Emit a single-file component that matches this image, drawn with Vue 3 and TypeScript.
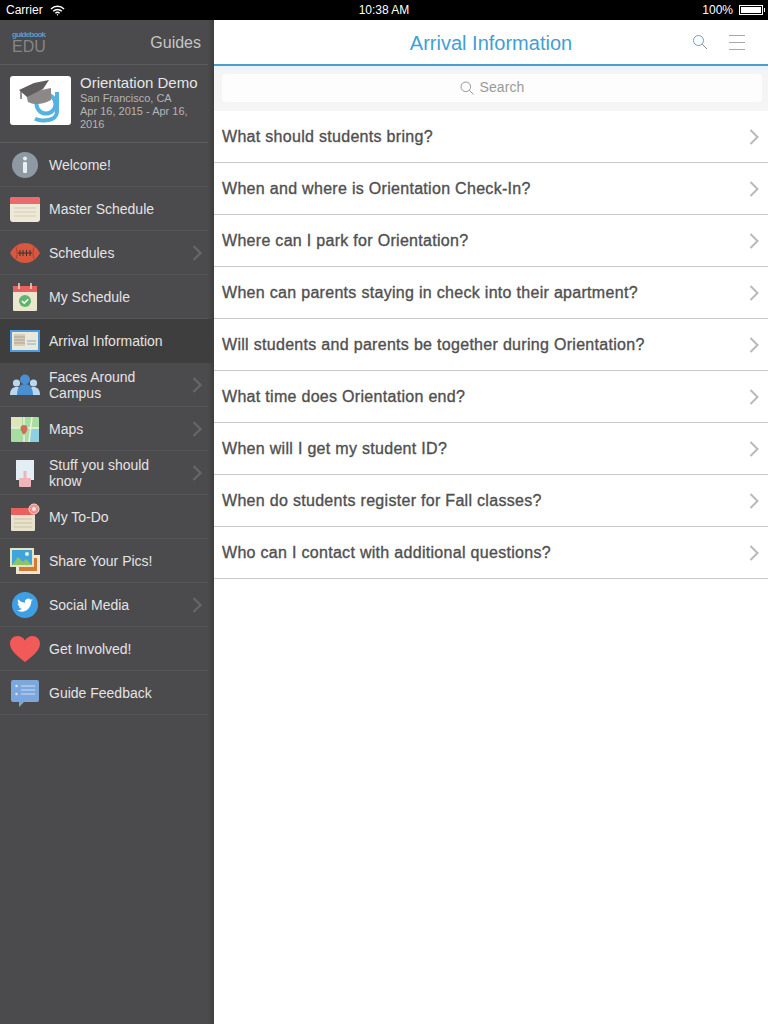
<script setup lang="ts">
const menu = [
  { label: "Welcome!", icon: "info" },
  { label: "Master Schedule", icon: "calendar" },
  { label: "Schedules", icon: "football", more: true },
  { label: "My Schedule", icon: "check" },
  { label: "Arrival Information", icon: "arrival", active: true },
  { label: "Faces Around Campus", icon: "faces", more: true },
  { label: "Maps", icon: "map", more: true },
  { label: "Stuff you should know", icon: "stuff", more: true },
  { label: "My To-Do", icon: "todo" },
  { label: "Share Your Pics!", icon: "pics" },
  { label: "Social Media", icon: "twitter", more: true },
  { label: "Get Involved!", icon: "heart" },
  { label: "Guide Feedback", icon: "feedback" },
];

const questions = [
  "What should students bring?",
  "When and where is Orientation Check-In?",
  "Where can I park for Orientation?",
  "When can parents staying in check into their apartment?",
  "Will students and parents be together during Orientation?",
  "What time does Orientation end?",
  "When will I get my student ID?",
  "When do students register for Fall classes?",
  "Who can I contact with additional questions?",
];
</script>

<template>
  <div class="screen">
    <header class="status">
      <div class="status-left">
        <span>Carrier</span>
        <svg width="15" height="11" viewBox="0 0 15 11" fill="none" stroke="#fff" stroke-width="1.5">
          <path d="M1 4a9.2 9.2 0 0 1 13 0" />
          <path d="M3.2 6.2a6.1 6.1 0 0 1 8.6 0" />
          <path d="M5.4 8.3a3 3 0 0 1 4.2 0" />
          <circle cx="7.5" cy="9.7" r=".7" fill="#fff" stroke="none" />
        </svg>
      </div>
      <div class="status-time">10:38 AM</div>
      <div class="status-right">
        <span>100%</span>
        <span class="battery"><span class="battery-fill"></span></span>
      </div>
    </header>

    <div class="body">
      <aside class="sidebar">
        <div class="side-head">
          <div class="brand">
            <span class="brand-top">guidebook</span>
            <span class="brand-edu">EDU</span>
          </div>
          <span class="guides">Guides</span>
        </div>

        <div class="guide-card">
          <div class="guide-logo">
            <svg width="61" height="49" viewBox="0 0 61 49">
              <path d="M47 16v19c0 7-6 10-15 9.500-3-.2-5-.8-7-1.800" fill="none" stroke="#55b1e0" stroke-width="4" />
              <circle cx="36" cy="28" r="9.500" fill="none" stroke="#55b1e0" stroke-width="4" />
              <path d="M17 17c0 4 0 7 1 9 5 3 15 3 23-2V12z" fill="#8c8887" />
              <path d="M9 14 24 7 39 4 33 13 17 21z" fill="#5f5d5e" />
              <path d="M11 15v8" stroke="#6f6c6c" stroke-width="1.500" />
            </svg>
          </div>
          <div class="guide-text">
            <div class="guide-name">Orientation Demo</div>
            <div class="guide-meta">San Francisco, CA</div>
            <div class="guide-meta">Apr 16, 2015 - Apr 16, 2016</div>
          </div>
        </div>

        <nav class="menu">
          <div v-for="item in menu" :key="item.label" class="menu-row" :class="{ active: item.active }">
            <svg class="menu-icon" width="32" height="32" viewBox="0 0 32 32">
              <template v-if="item.icon === 'info'">
                <circle cx="16" cy="16" r="13" fill="#8d9aa3" />
                <circle cx="16" cy="9.500" r="2" fill="#e8eef2" />
                <rect x="14" y="13" width="4" height="11" rx="1" fill="#e8eef2" />
              </template>
              <template v-else-if="item.icon === 'calendar'">
                <rect x="1" y="4" width="30" height="25" rx="3" fill="#eee8d6" />
                <path d="M1 7a3 3 0 0 1 3-3h24a3 3 0 0 1 3 3v4H1z" fill="#ed6a6a" />
                <path d="M5 15h22M5 19h22M5 23h22" stroke="#d3ccb6" stroke-width="1" />
              </template>
              <template v-else-if="item.icon === 'football'">
                <path d="M1 16C5 9 10 6 16 6s11 3 15 10c-4 7-9 10-15 10S5 23 1 16z" fill="#d9573f" />
                <path d="M9 16h14M11 13v6M14 13v6M17.500 13v6M21 13v6" stroke="#3f2f2b" stroke-width="1" />
                <path d="M7 10c1.500 4 1.500 8 0 12M25 10c-1.500 4-1.500 8 0 12" fill="none" stroke="#a8412f" stroke-width="1" />
              </template>
              <template v-else-if="item.icon === 'check'">
                <rect x="4" y="5" width="24" height="25" rx="1" fill="#ece6cf" />
                <path d="M4 6a1 1 0 0 1 1-1h22a1 1 0 0 1 1 1v5H4z" fill="#e9605e" />
                <path d="M10 2v6M22 2v6" stroke="#e9dfc8" stroke-width="1.500" />
                <circle cx="16" cy="20" r="6" fill="#5fb56d" />
                <path d="M13 20l2.200 2.200 4-4" fill="none" stroke="#fff" stroke-width="1.500" />
              </template>
              <template v-else-if="item.icon === 'arrival'">
                <rect x="1" y="5" width="30" height="22" fill="#4d9ce0" />
                <rect x="3" y="7" width="26" height="18" fill="#ece8d8" />
                <rect x="5" y="9" width="11" height="12" fill="#d8ccb8" />
                <path d="M5 12h11M5 15h11M5 18h11" stroke="#a9a594" stroke-width="1" />
                <path d="M18 16h9M18 19h9" stroke="#7aaed0" stroke-width="1.200" />
              </template>
              <template v-else-if="item.icon === 'faces'">
                <circle cx="7.500" cy="14" r="3.600" fill="#b9d8ef" />
                <path d="M1 26c0-6 3-8 6.500-8s7 2 7 8z" fill="#b9d8ef" />
                <circle cx="24.500" cy="14" r="3.600" fill="#b9d8ef" />
                <path d="M17.500 26c0-6 3.500-8 7-8s6.500 2 6.500 8z" fill="#b9d8ef" />
                <circle cx="16" cy="10.500" r="5" fill="#4a8fd0" />
                <path d="M8 26c0-8 4-11 8-11s8 3 8 11z" fill="#4a8fd0" />
              </template>
              <template v-else-if="item.icon === 'map'">
                <rect x="2" y="4" width="28" height="25" rx="1" fill="#a9dca0" />
                <path d="M2 4h11v11H2z" fill="#dfe5b8" />
                <path d="M20 16h10v13H20z" fill="#8fcfe6" />
                <path d="M15 4v25M2 15h28M23 4l-3 25" stroke="#e8eee0" stroke-width="1.600" fill="none" />
                <path d="M15 12a3.500 3.500 0 0 1 3.500 3.500c0 2.500-3.500 6.500-3.500 6.500s-3.500-4-3.500-6.500A3.500 3.500 0 0 1 15 12z" fill="#c9705c" />
              </template>
              <template v-else-if="item.icon === 'stuff'">
                <rect x="7" y="3" width="18" height="20" fill="#e3edf4" />
                <rect x="10" y="21" width="12" height="9" rx="1" fill="#efb4b8" />
                <path d="M16 14v10" stroke="#efb4b8" stroke-width="3" />
              </template>
              <template v-else-if="item.icon === 'todo'">
                <rect x="2" y="7" width="24" height="23" rx="1" fill="#e9e2cb" />
                <path d="M2 8a1 1 0 0 1 1-1h22a1 1 0 0 1 1 1v6H2z" fill="#e9605e" />
                <path d="M5 18h18M5 22h18M5 26h18" stroke="#c9c2aa" stroke-width="1.200" />
                <circle cx="25" cy="8" r="5" fill="#f08a88" stroke="#e9e2cb" stroke-width="1" />
                <path d="M25 5.500v5M22.800 6.700l4.400 2.600M27.200 6.700l-4.400 2.600" stroke="#fff" stroke-width="1" />
              </template>
              <template v-else-if="item.icon === 'pics'">
                <rect x="7" y="10" width="24" height="19" fill="#efe6cf" />
                <rect x="10" y="13" width="18" height="13" fill="#d57a34" />
                <rect x="1" y="3" width="24" height="19" fill="#e6e2c5" />
                <rect x="3" y="5" width="20" height="15" fill="#3fa3dc" />
                <path d="M3 20l6-8 5 5 3-3 6 6z" fill="#8dc36b" />
                <circle cx="18" cy="9" r="2" fill="#eef2d0" />
              </template>
              <template v-else-if="item.icon === 'twitter'">
                <circle cx="16" cy="16" r="13" fill="#3f9fe6" />
                <path d="M24 11.200c-.6.300-1.200.400-1.900.500.700-.400 1.200-1 1.400-1.800-.6.400-1.300.600-2 .800a3.300 3.300 0 0 0-5.600 3c-2.700-.1-5.100-1.400-6.700-3.400-.9 1.500-.4 3.400 1 4.400-.5 0-1-.2-1.500-.4 0 1.600 1.100 3 2.600 3.300-.5.100-1 .100-1.500 0 .4 1.300 1.600 2.200 3.100 2.300-1.400 1.100-3.200 1.600-4.900 1.400 4.800 3.100 13.900 1.200 14.400-9.200.7-.4 1.200-1 1.600-1.700z" fill="#fff" />
              </template>
              <template v-else-if="item.icon === 'heart'">
                <path d="M16 29C8 23 1 17 1 10.500 1 6 4.500 3 8.500 3c3 0 6 1.600 7.500 4.500C17.500 4.600 20.500 3 23.500 3 27.500 3 31 6 31 10.500 31 17 24 23 16 29z" fill="#f25a5a" />
              </template>
              <template v-else-if="item.icon === 'feedback'">
                <path d="M4 3h24a2 2 0 0 1 2 2v18a2 2 0 0 1-2 2H15l-5 5v-5H4a2 2 0 0 1-2-2V5a2 2 0 0 1 2-2z" fill="#7ba7dc" />
                <path d="M12 9h14M12 13h14M12 17h14" stroke="#cfe0f4" stroke-width="1.200" />
                <circle cx="7.500" cy="9" r="1.200" fill="#dce9f7" />
                <circle cx="7.500" cy="17" r="1.200" fill="#dce9f7" />
              </template>
            </svg>
            <span class="menu-label">{{ item.label }}</span>
            <svg v-if="item.more" class="menu-more" width="10" height="16" viewBox="0 0 10 16" fill="none" stroke="#666566" stroke-width="2.400">
              <path d="M1.500 1l7 7-7 7" />
            </svg>
          </div>
        </nav>
      </aside>

      <main class="content">
        <div class="topbar">
          <h1 class="title">Arrival Information</h1>
          <svg class="top-search" width="16" height="16" viewBox="0 0 16 16" fill="none" stroke="#5ba6cf" stroke-width="1">
            <circle cx="6.500" cy="6.500" r="5" />
            <path d="M10.200 10.200l4.800 4.800" stroke="#8a8a8a" />
          </svg>
          <div class="burger"><i></i><i></i><i></i></div>
        </div>
        <div class="search-wrap">
          <div class="search-box">
            <svg width="14" height="14" viewBox="0 0 14 14" fill="none" stroke="#9a9a9a" stroke-width="1">
              <circle cx="5.800" cy="5.800" r="4.800" />
              <path d="M9.300 9.300l4.200 4.200" />
            </svg>
            <span>Search</span>
          </div>
        </div>
        <ul class="list">
          <li v-for="q in questions" :key="q" class="list-row">
            <span>{{ q }}</span>
            <svg width="10" height="16" viewBox="0 0 10 16" fill="none" stroke="#b9b9b9" stroke-width="2">
              <path d="M1.500 1l7 7-7 7" />
            </svg>
          </li>
        </ul>
      </main>
    </div>
  </div>
</template>

<style scoped>
.screen {
  width: 768px;
  height: 1024px;
  display: flex;
  flex-direction: column;
  overflow: hidden;
  font-family: "Liberation Sans", Arial, sans-serif;
  background: #fff;
}

.status {
  height: 20px;
  flex: none;
  background: #000;
  color: #fff;
  font-size: 12px;
  display: grid;
  grid-template-columns: 1fr auto 1fr;
  align-items: center;
  padding: 0 6px;
}
.status-left {
  display: flex;
  align-items: center;
  gap: 7px;
}
.status-right {
  display: flex;
  justify-content: flex-end;
  align-items: center;
  gap: 6px;
}
.battery {
  width: 24px;
  height: 10px;
  margin-right: -1px;
  border: 1px solid #fff;
  box-sizing: border-box;
  padding: 1px;
  display: block;
  position: relative;
}
.battery::after {
  content: "";
  position: absolute;
  right: -3px;
  top: 2px;
  width: 1px;
  height: 4px;
  background: #fff;
}
.battery-fill {
  display: block;
  height: 100%;
  background: #fff;
}

.body {
  flex: 1;
  display: flex;
  min-height: 0;
}

.sidebar {
  width: 214px;
  flex: none;
  background: linear-gradient(to right, #4b4a4c 0, #4b4a4c 208px, #3f3e3f 214px);
  color: #eee;
}
.side-head {
  height: 45px;
  width: 208px;
  box-sizing: border-box;
  padding: 2px 7px 0 12px;
  display: flex;
  align-items: center;
  justify-content: space-between;
  border-bottom: 1px solid #5d5c5c;
}
.brand {
  display: flex;
  flex-direction: column;
  line-height: 1;
}
.brand-top {
  font-size: 8px;
  font-weight: 700;
  color: #5b9cc9;
  letter-spacing: -0.8px;
}
.brand-edu {
  font-size: 16px;
  color: #868686;
}
.guides {
  font-size: 16px;
  color: #c6c6c6;
}

.guide-card {
  height: 78px;
  width: 208px;
  box-sizing: border-box;
  padding: 9px 0 0 10px;
  display: flex;
  gap: 9px;
  border-bottom: 1px solid #5d5c5c;
}
.guide-logo {
  width: 61px;
  height: 49px;
  flex: none;
  margin-top: 2px;
  background: #fff;
  border-radius: 3px;
}
.guide-text {
  min-width: 0;
}
.guide-name {
  font-size: 15px;
  line-height: 17px;
  margin-bottom: 1px;
  color: #e6e6e6;
}
.guide-meta {
  font-size: 11px;
  line-height: 13px;
  color: #b5b5b5;
}

.menu-row {
  width: 208px;
  height: 44px;
  box-sizing: border-box;
  padding: 0 6px 0 9px;
  display: flex;
  align-items: center;
  gap: 8px;
  border-bottom: 1px solid #575656;
  font-size: 14px;
  line-height: 16px;
  color: #e4e4e4;
}
.menu-row.active {
  width: 214px;
  padding-right: 12px;
  background: #3f3e3f;
  border-bottom-color: #3f3e3f;
}
.menu-icon {
  flex: none;
}
.menu-label {
  flex: 1;
  min-width: 0;
}
.menu-more {
  flex: none;
}

.content {
  flex: 1;
  min-width: 0;
  display: flex;
  flex-direction: column;
}
.topbar {
  height: 44px;
  flex: none;
  position: relative;
  display: flex;
  align-items: center;
  justify-content: flex-end;
  gap: 21px;
  padding-right: 23px;
  border-bottom: 2px solid #4e9bcf;
}
.title {
  position: absolute;
  left: 0;
  right: 0;
  top: 12px;
  margin: 0;
  text-align: center;
  font-size: 20px;
  font-weight: 400;
  color: #3f9fd6;
}
.burger {
  width: 16px;
  display: flex;
  flex-direction: column;
  gap: 6px;
}
.burger i {
  display: block;
  height: 1px;
  background: #a8a8a8;
}
.search-wrap {
  height: 45px;
  flex: none;
  box-sizing: border-box;
  padding: 8px 6px 9px 8px;
  background: linear-gradient(to bottom, #e9f3f5 0, #f5f5f5 6px);
}
.search-box {
  height: 28px;
  background: #fdfdfd;
  border-radius: 4px;
  display: flex;
  align-items: center;
  justify-content: center;
  gap: 6px;
  font-size: 14px;
  letter-spacing: 0.1px;
  color: #9a9a9a;
}
.search-box span {
  position: relative;
  top: -1px;
}
.list {
  list-style: none;
  margin: 0;
  padding: 0;
}
.list-row {
  height: 52px;
  box-sizing: border-box;
  padding: 0 9px 0 8px;
  display: flex;
  align-items: center;
  justify-content: space-between;
  border-bottom: 1px solid #c9c9c9;
  font-size: 16px;
  letter-spacing: 0.3px;
  color: #505050;
  -webkit-text-stroke: 0.35px #505050;
}
</style>
